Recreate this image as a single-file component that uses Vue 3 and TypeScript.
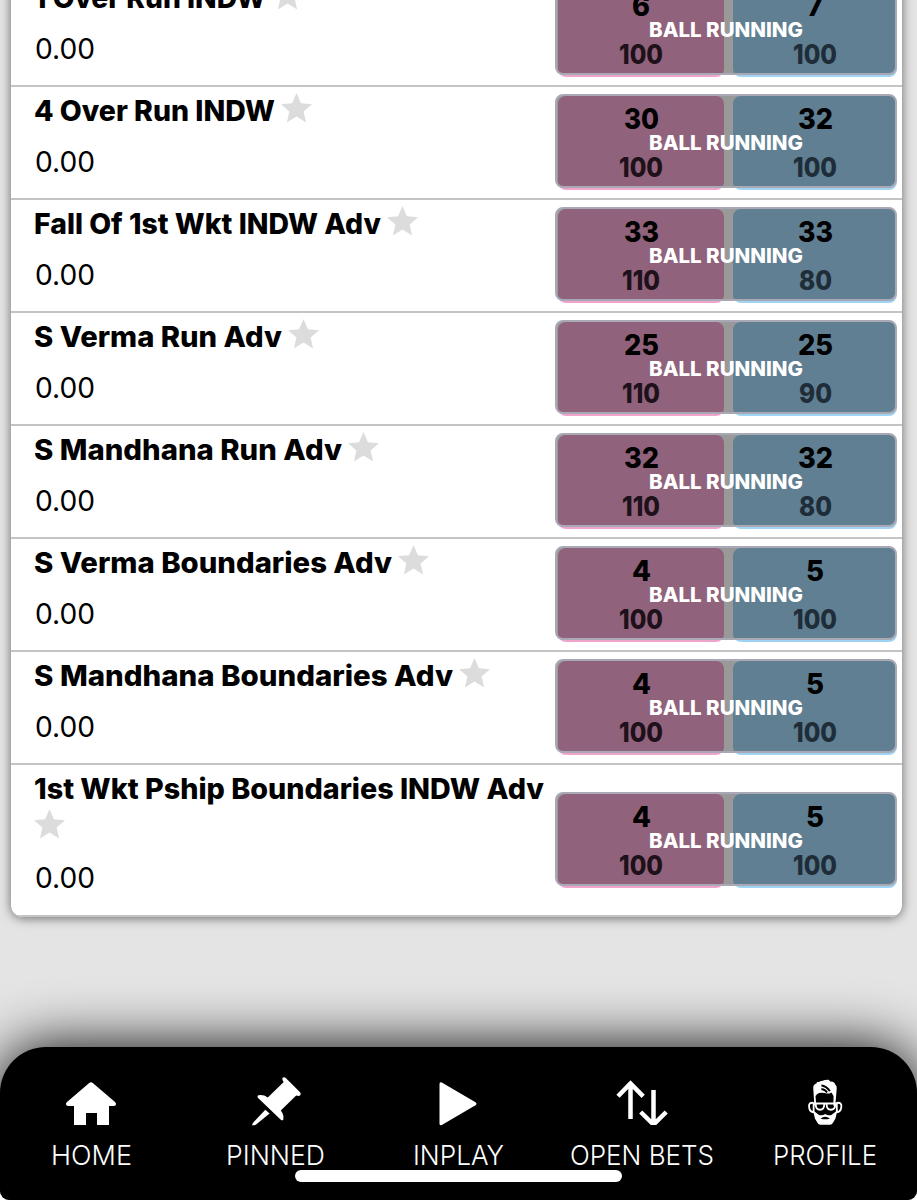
<script setup lang="ts">
import { h } from 'vue'

interface Market { name: string; width: number; no: string; yes: string; noRate: string; yesRate: string }

const markets: Market[] = [
  { name: '1 Over Run INDW', width: 232, no: '6', yes: '7', noRate: '100', yesRate: '100' },
  { name: '4 Over Run INDW', width: 241, no: '30', yes: '32', noRate: '100', yesRate: '100' },
  { name: 'Fall Of 1st Wkt INDW Adv', width: 347, no: '33', yes: '33', noRate: '110', yesRate: '80' },
  { name: 'S Verma Run Adv', width: 248, no: '25', yes: '25', noRate: '110', yesRate: '90' },
  { name: 'S Mandhana Run Adv', width: 308, no: '32', yes: '32', noRate: '110', yesRate: '80' },
  { name: 'S Verma Boundaries Adv', width: 358, no: '4', yes: '5', noRate: '100', yesRate: '100' },
  { name: 'S Mandhana Boundaries Adv', width: 419, no: '4', yes: '5', noRate: '100', yesRate: '100' },
  { name: '1st Wkt Pship Boundaries INDW Adv', width: 510, no: '4', yes: '5', noRate: '100', yesRate: '100' },
]

const tabs = [
  { id: 'home', label: 'HOME', width: 81 },
  { id: 'pin', label: 'PINNED', width: 99 },
  { id: 'play', label: 'INPLAY', width: 91 },
  { id: 'bets', label: 'OPEN BETS', width: 144 },
  { id: 'profile', label: 'PROFILE', width: 104 },
]

const digitWidths: Record<string, number> = { '100': 44, '110': 38, '4': 19, '5': 18, '6': 18, '7': 16 }
const digits = (value: string) => digitWidths[value] ?? 35

// Single line of text set to a fixed measure, centred on its cap height.
const Line = (props: { text: string; width: number; size: number }) =>
  h('svg', { width: props.width, height: 38, overflow: 'visible' }, [
    h('text', {
      x: 0,
      y: 19 + props.size * 0.364,
      'font-size': props.size,
      fill: 'currentColor',
      textLength: props.width,
      lengthAdjust: 'spacingAndGlyphs',
    }, props.text),
  ])
Line.props = ['text', 'width', 'size']
</script>

<template>
  <div class="screen">
    <main class="card">
      <section v-for="m in markets" :key="m.name" class="row">
        <div class="info">
          <div class="title">
            <Line class="bold" :text="m.name" :width="m.width" :size="28" />
            <svg class="star" width="31" height="30" viewBox="0 0 31 30">
              <path d="M15.5 0l4.4 10.2 11.1 1-8.4 7.3 2.5 10.9-9.6-5.8-9.6 5.8 2.5-10.9L0 11.2l11.1-1z" />
            </svg>
          </div>
          <Line class="exposure" text="0.00" :width="60" :size="28" />
        </div>
        <div class="odds">
          <div class="cell no">
            <Line class="bold price" :text="m.no" :width="digits(m.no)" :size="28" />
            <Line class="bold rate" :text="m.noRate" :width="m.noRate.length === 2 ? 33 : digits(m.noRate)" :size="27" />
          </div>
          <div class="cell yes">
            <Line class="bold price" :text="m.yes" :width="digits(m.yes)" :size="28" />
            <Line class="bold rate" :text="m.yesRate" :width="m.yesRate.length === 2 ? 33 : digits(m.yesRate)" :size="27" />
          </div>
          <div class="overlay">
            <Line class="bold" text="BALL RUNNING" :width="154" :size="20.5" />
          </div>
        </div>
      </section>
    </main>

    <nav class="tabs">
      <div v-for="t in tabs" :key="t.id" class="tab">
        <svg class="icon" width="60" height="56" viewBox="0 0 60 56">
          <path v-if="t.id === 'home'" transform="translate(-1 .4)" d="M28.2 8.6q1.8-1.5 3.6 0L54 27.5q1.6 1.5.8 3-.5 1-2.3 1H48V50.5H36V38.7H25V50.5H13V31.5H7.5q-1.8 0-2.3-1-.8-1.500.8-3z" />
          <g v-else-if="t.id === 'pin'" transform="translate(4.300 .5)">
            <path d="M33.200 3.200q2-1 3.300.3L50.800 17.800q1.200 1.500.2 3-1.500 1.100-4.100.2L31.500 36q3.500 4.600 2.500 9.200-1 1.300-2.500 0L8.500 23.200q-1-1.500.5-2.400 5-1 9.500 2.200L34.400 7.500q-2-2.300-1.200-4.300z" />
            <path d="M16 35.200l4.300 3.900L6.500 50.300q-2.200.8-3.800.4.300-1.700 1.500-3z" />
          </g>
          <path v-else-if="t.id === 'play'" transform="translate(-.5 .5)" d="M12 9.500q0-2.500 2.300-1.500L48 27.800q2 1.500 0 3L14.300 50.500Q12 51.500 12 49z" />
          <svg v-else-if="t.id === 'bets'" width="60" height="51">
            <path class="stroke" d="M18.500 45V9.500M6 22.300L18.500 9.500 31.200 22.300M41.500 16v34M28.700 38l12.800 12.500 12.700-12.500" />
          </svg>
          <g v-else transform="translate(3.600 .6) scale(.95 .99)">
            <path d="M16 31l-1.200-18q-.2-3 3.200-4.500l1-1.500q2 .3 3-.8 3-.5 5-1.200l4-.2 2 1.800q4-.2 5 3 2 1.400 1.500 4.400L38 31h-2l.2-10-2.200-3.500q-3 2-7 .7-5-1.200-8 .8l-1.800 2L18 31z" transform="translate(.6 .5)" />
            <path class="thin" d="M24 11q5 .5 9 5.700M24 14.500q4 .5 6 3.500" stroke="#000" />
            <path class="thin" d="M15.500 28.500q-5-.5-4.500 4 .5 5 5 5.500M40.500 28.500q5-.5 4.500 4-.5 5-5 5.500M16 29.200h24M18 30q0 5.500 4.500 5.500Q27 35.500 27 30M29.500 30q0 5.500 4.500 5.500t4.500-5.500M15.800 28v10M40.200 28v10" stroke="#fff" />
            <path d="M15 36l6.500 4.700q3.500 1.300 6.500-.9 3 2.200 6.500.9L41 36l-2.300 8.500-2.700 4.500q-1 1.700-2.800 1.700H22.800q-1.800 0-2.800-1.700l-2.700-4.500z" />
            <path d="M23 44.500q5-3.600 10 0-5 1.200-10 0z" fill="#000" />
          </g>
        </svg>
        <Line class="label" :text="t.label" :width="t.width" :size="27.5" />
      </div>
      <div class="indicator"></div>
    </nav>
  </div>
</template>

<style>
body {
  margin: 0;
  background: #fff;
}
</style>

<style scoped>
.screen {
  width: 917px;
  height: 1200px;
  overflow: hidden;
  display: flex;
  flex-direction: column;
  justify-content: flex-end;
  background: #e4e4e4;
  border-radius: 0 0 9px 9px;
  font-family: Inter, "Liberation Sans", sans-serif;
  color: #000;
}
.card {
  flex: none;
  width: 891px;
  margin: 0 0 130px 11px;
  background: #fff;
  border-radius: 12px;
  overflow: hidden;
  box-shadow: 0 1px 11px rgba(0, 0, 0, 0.55);
}
.row {
  box-sizing: border-box;
  min-height: 113px;
  display: flex;
  align-items: center;
  justify-content: space-between;
  padding: 0 5px 0 23px;
  border-bottom: 2px solid #c4c4c4;
}
.info {
  width: 520px;
  display: flex;
  flex-direction: column;
  align-self: flex-start;
  gap: 13px;
  padding: 5px 0 18px;
}
.row:not(:last-child) .info {
  padding-bottom: 17px;
}
.title {
  display: flex;
  flex-wrap: wrap;
  column-gap: 6px;
}
.bold {
  font-weight: 760;
}
.exposure {
  margin-left: 1px;
}
.star {
  margin: 1px 0 7px;
  fill: #dcdcdc;
}
.odds {
  position: relative;
  flex: none;
  box-sizing: border-box;
  width: 342px;
  height: 96px;
  margin-bottom: 1px;
  padding: 2px 0 0 3px;
  display: flex;
  gap: 9px;
}
.cell {
  width: 166px;
  border-radius: 8px;
  display: flex;
  flex-direction: column;
  align-items: center;
}
.no {
  background: #f0a4cd;
}
.yes {
  width: 164px;
  background: #a0d4f4;
}
.price {
  position: relative;
  z-index: 2;
  margin-top: 4px;
}
.rate {
  margin-top: 10px;
  color: #331d2e;
}
.yes .rate {
  color: #354c60;
}
.overlay {
  position: absolute;
  inset: 0 0 2px 0;
  z-index: 1;
  box-sizing: border-box;
  border: 2px solid #a9a8b5;
  border-radius: 8px;
  background: rgba(0, 0, 0, 0.4);
  color: #fff;
  display: flex;
  justify-content: center;
  align-items: center;
  padding-top: 4px;
}
.tabs {
  position: relative;
  flex: none;
  box-sizing: border-box;
  height: 153px;
  display: grid;
  grid-template-columns: repeat(5, 1fr);
  padding-top: 27px;
  background: #000;
  border-radius: 46px 46px 0 0;
  box-shadow: 0 0 58px #000;
}
.tab {
  display: flex;
  flex-direction: column;
  align-items: center;
  color: #fff;
}
.icon {
  flex: none;
  margin-bottom: 6px;
  fill: #fff;
}
.stroke {
  fill: none;
  stroke: #fff;
  stroke-width: 4.5;
}
.thin {
  fill: none;
  stroke-width: 1.9;
}
.label {
  font-weight: 300;
}
.indicator {
  position: absolute;
  left: 295px;
  bottom: 18.5px;
  width: 327px;
  height: 12px;
  border-radius: 6px;
  background: #fff;
}
</style>
